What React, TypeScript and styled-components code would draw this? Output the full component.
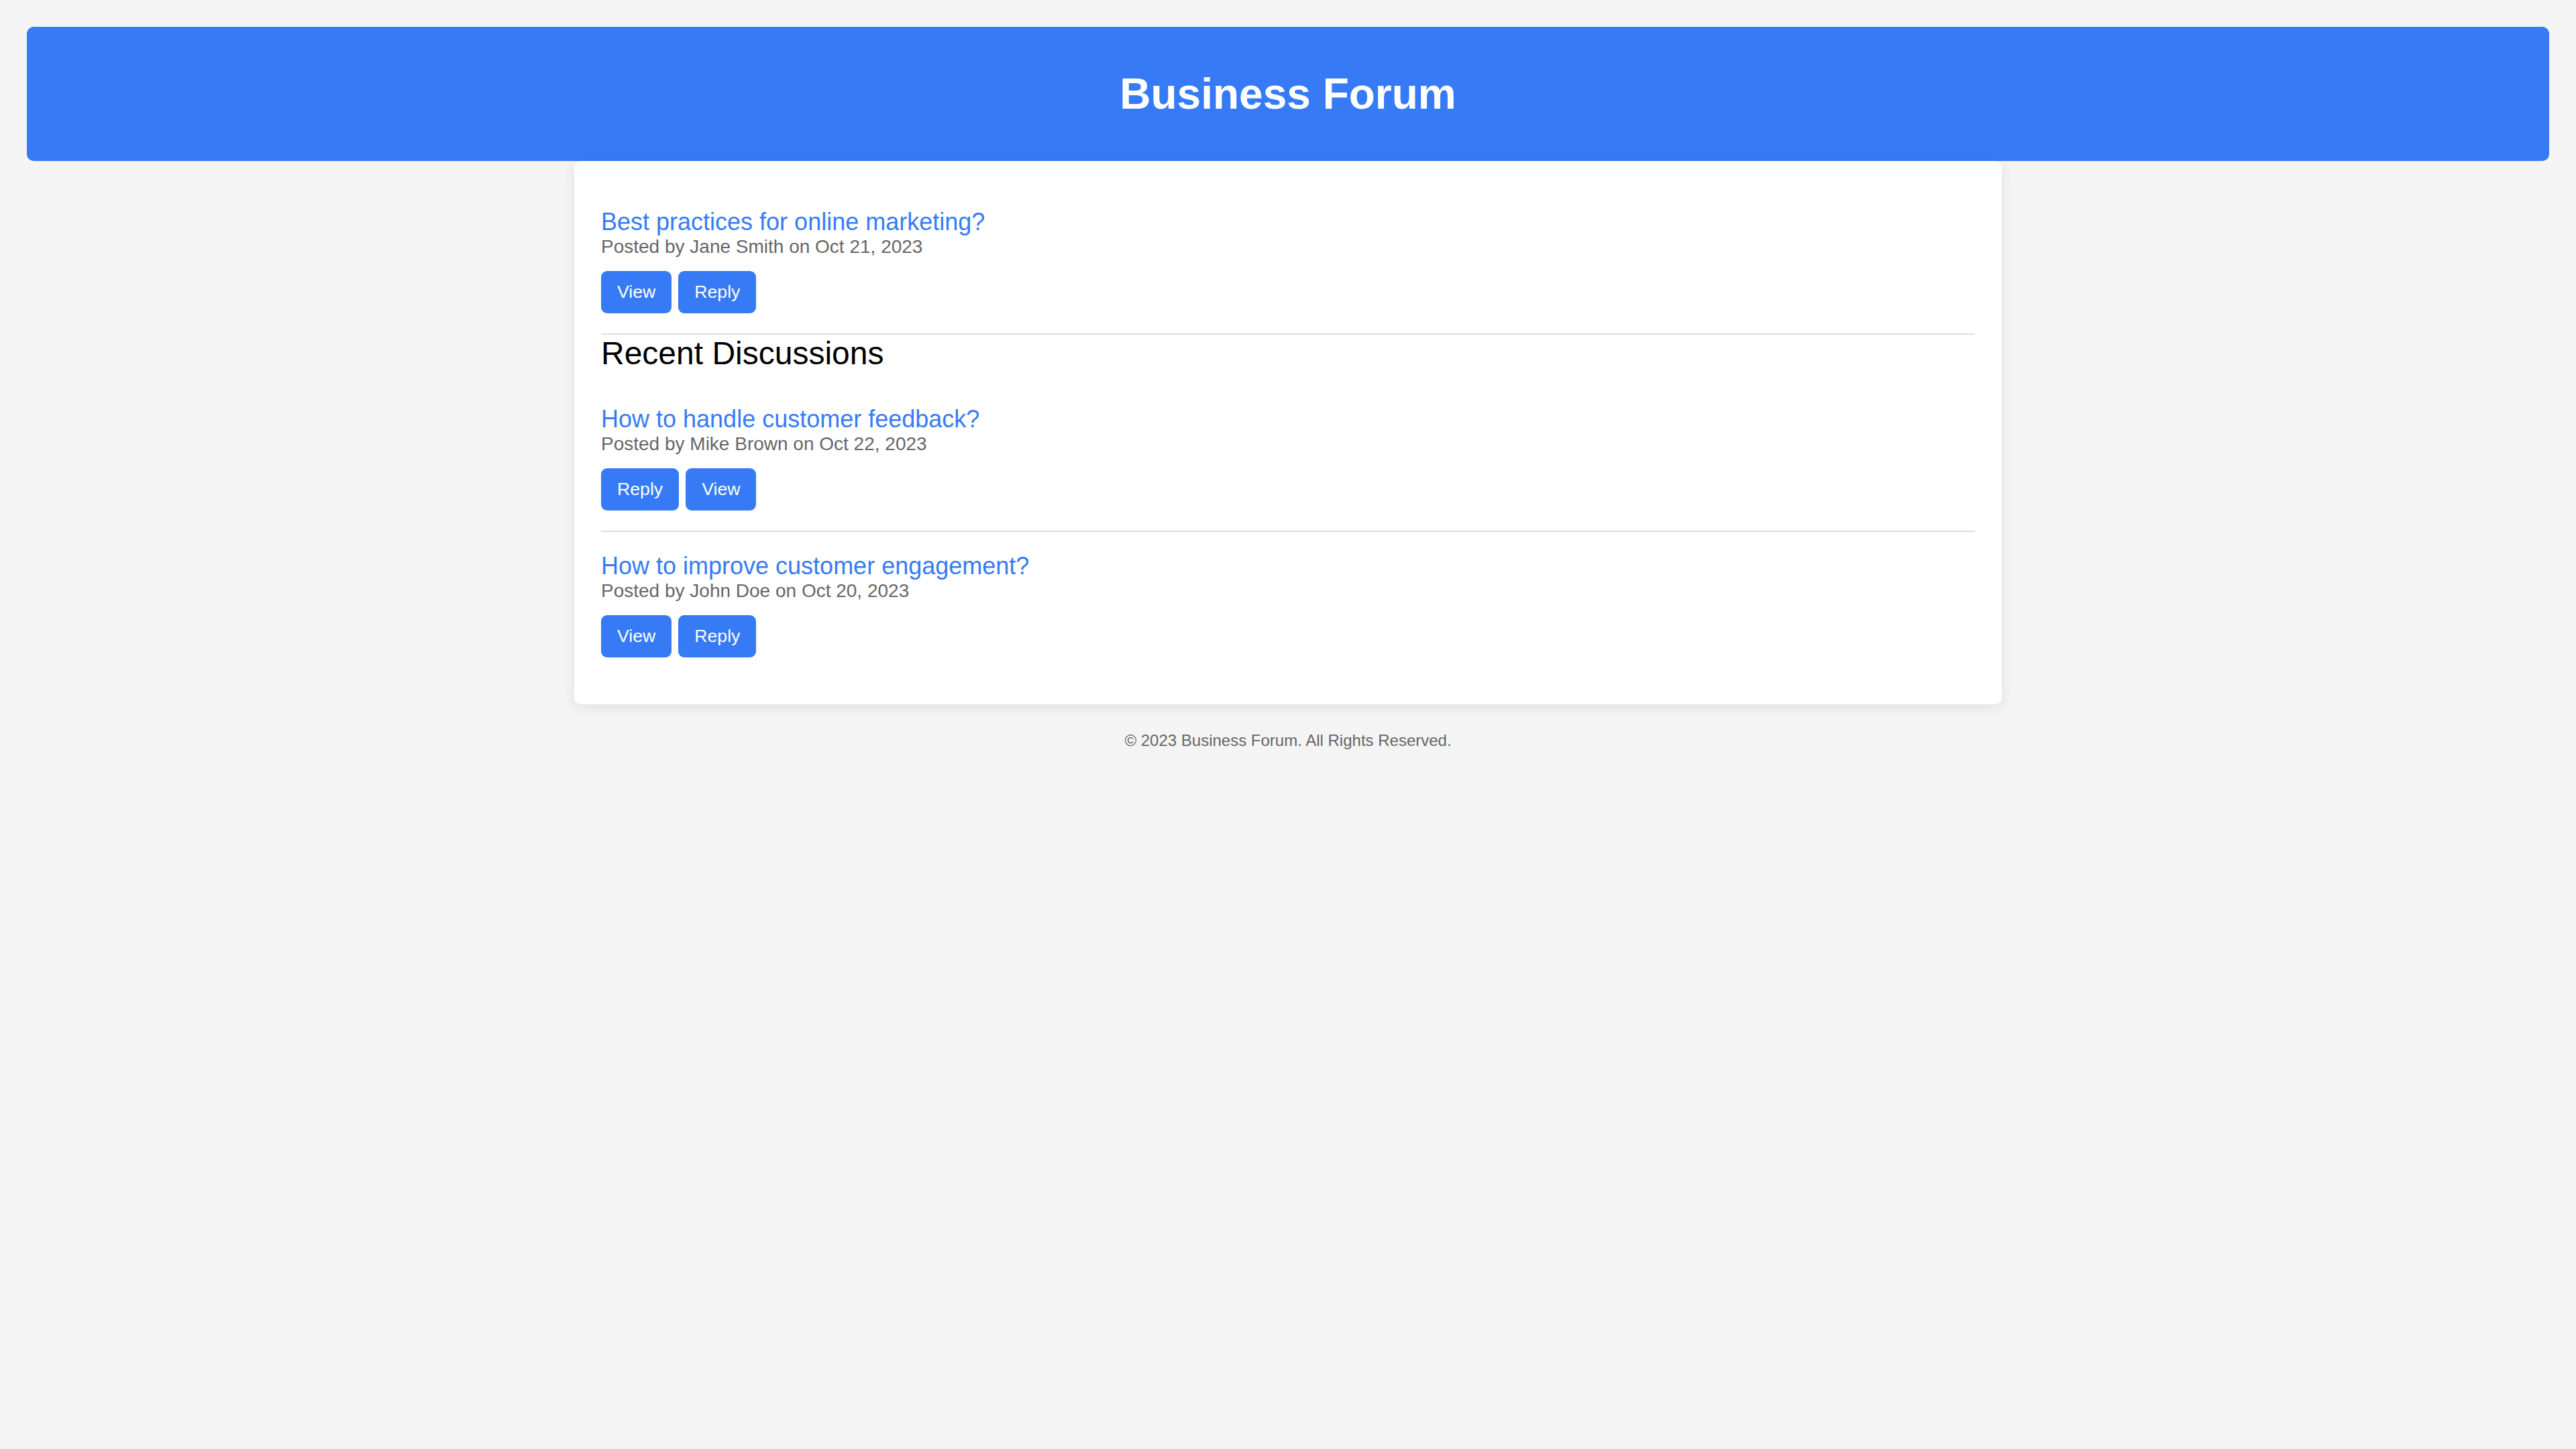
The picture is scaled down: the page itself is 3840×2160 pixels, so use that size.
import React from "react";
import styled, { createGlobalStyle } from "styled-components";

const GlobalStyle = createGlobalStyle`
  html, body {
    margin: 0;
    padding: 0;
    background: #f4f4f4;
  }
  body {
    font-family: "Liberation Sans", Arial, Helvetica, sans-serif;
    color: #000;
  }
`;

const BLUE = "#367bf5";

const Page = styled.div`
  min-height: 100vh;
  box-sizing: border-box;
  padding: 40px;
  background: #f4f4f4;
`;

const Header = styled.header`
  background: ${BLUE};
  color: #fff;
  border-radius: 10px;
  padding: 20px;
  text-align: center;
`;

const Title = styled.h1`
  margin: 43px 0;
  font-size: 64px;
  font-weight: 700;
  line-height: normal;
`;

const Card = styled.main`
  width: 2048px;
  margin: 0 auto;
  padding: 40px;
  background: #fff;
  border-radius: 10px;
  box-shadow: 0 4px 20px rgba(0, 0, 0, 0.09);
`;

const Post = styled.article<{ $last?: boolean }>`
  padding: 30px 0;
  border-bottom: ${(p) => (p.$last ? "none" : "2px solid #ddd")};
`;

const PostTitle = styled.a`
  display: block;
  color: ${BLUE};
  font-size: 36px;
  line-height: normal;
  text-decoration: none;
  cursor: pointer;
`;

const Meta = styled.p`
  margin: 0;
  color: #666;
  font-size: 28px;
  line-height: normal;
`;

const Actions = styled.div`
  display: flex;
  gap: 10px;
  margin-top: 20px;
`;

const Button = styled.button`
  background: ${BLUE};
  color: #fff;
  border: none;
  border-radius: 9px;
  padding: 16px 24px;
  font-family: "Liberation Sans", Arial, sans-serif;
  font-size: 26.67px;
  line-height: normal;
  cursor: pointer;
`;

const SectionTitle = styled.h2`
  margin: 0 0 20px;
  font-size: 48px;
  font-weight: 400;
  line-height: normal;
  color: #000;
`;

const Footer = styled.footer`
  padding: 40px 0;
  text-align: center;
  color: #666;
  font-size: 24px;
  line-height: normal;
`;

type PostData = {
  title: string;
  author: string;
  date: string;
  actions: string[];
};

const featured: PostData = {
  title: "Best practices for online marketing?",
  author: "Jane Smith",
  date: "Oct 21, 2023",
  actions: ["View", "Reply"],
};

const recent: PostData[] = [
  {
    title: "How to handle customer feedback?",
    author: "Mike Brown",
    date: "Oct 22, 2023",
    actions: ["Reply", "View"],
  },
  {
    title: "How to improve customer engagement?",
    author: "John Doe",
    date: "Oct 20, 2023",
    actions: ["View", "Reply"],
  },
];

function PostItem({ post, last }: { post: PostData; last?: boolean }) {
  return (
    <Post $last={last}>
      <PostTitle>{post.title}</PostTitle>
      <Meta>
        Posted by {post.author} on {post.date}
      </Meta>
      <Actions>
        {post.actions.map((a) => (
          <Button key={a}>{a}</Button>
        ))}
      </Actions>
    </Post>
  );
}

export default function App() {
  return (
    <>
      <GlobalStyle />
      <Page>
        <Header>
          <Title>Business Forum</Title>
        </Header>
        <Card>
          <PostItem post={featured} />
          <SectionTitle>Recent Discussions</SectionTitle>
          {recent.map((p, i) => (
            <PostItem key={p.title} post={p} last={i === recent.length - 1} />
          ))}
        </Card>
        <Footer>© 2023 Business Forum. All Rights Reserved.</Footer>
      </Page>
    </>
  );
}
